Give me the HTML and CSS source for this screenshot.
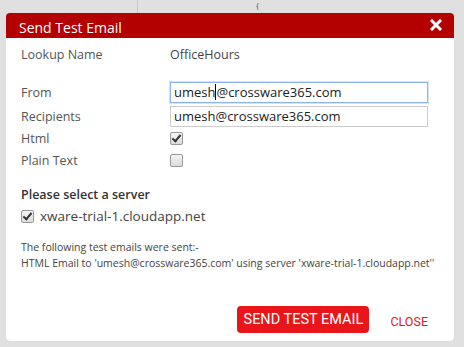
FILE: index.html
```html
<!DOCTYPE html>
<html lang="en">
<head>
    <meta charset="UTF-8">
    <title>Send Test Email</title>
    <link rel="stylesheet" href="styles.css">
</head>
<body>
    <div class="backdrop">
        <div class="bg-line"></div>
        <span class="bg-brace">{</span>
    </div>

    <div class="dialog">
        <div class="dialog-header">
            <span class="dialog-title">Send Test Email</span>
            <svg class="close-x" width="12" height="12" viewBox="0 0 12 12">
                <path d="M2 2 L10 10 M10 2 L2 10" stroke="#fff" stroke-width="3" stroke-linecap="square"/>
            </svg>
        </div>

        <div class="dialog-body">
            <div class="row lookup">
                <span class="label">Lookup Name</span>
                <span class="value">OfficeHours</span>
            </div>

            <div class="row field">
                <span class="label">From</span>
                <div class="input focused">umesh<span class="caret"></span>@crossware365.com</div>
            </div>
            <div class="row field">
                <span class="label">Recipients</span>
                <div class="input">umesh@crossware365.com</div>
            </div>
            <div class="row check">
                <span class="label">Html</span>
                <span class="box checked"></span>
            </div>
            <div class="row check">
                <span class="label">Plain Text</span>
                <span class="box"></span>
            </div>

            <h4 class="section">Please select a server</h4>
            <div class="server">
                <span class="box checked"></span>
                <span>xware-trial-1.cloudapp.net</span>
            </div>

            <div class="result">
                <p>The following test emails were sent:-</p>
                <p>HTML Email to 'umesh@crossware365.com' using server 'xware-trial-1.cloudapp.net''</p>
            </div>
        </div>

        <div class="dialog-footer">
            <button class="send-button">SEND TEST EMAIL</button>
            <button class="close-button">CLOSE</button>
        </div>
    </div>
</body>
</html>
```

FILE: styles.css
```css
body {
    margin: 0;
    width: 464px;
    height: 347px;
    background: #e0e0e0;
    font-family: 'Open Sans', 'Noto Sans', sans-serif;
    color: #333;
    overflow: hidden;
    position: relative;
}

.backdrop {
    position: absolute;
    inset: 0;
}

.bg-line {
    position: absolute;
    left: 137px;
    top: 0;
    width: 1px;
    height: 13px;
    background: #c8c8c8;
}

.bg-brace {
    position: absolute;
    left: 256px;
    top: 1px;
    font-size: 8px;
    line-height: 8px;
    color: #4a3b8c;
}

.dialog {
    position: absolute;
    left: 6px;
    top: 13px;
    width: 448px;
    height: 328px;
    background: #fff;
    border-radius: 4px;
    display: flex;
    flex-direction: column;
    box-shadow: 0 0 1px rgba(0, 0, 0, 0.15);
}

.dialog-header {
    background: #b30000;
    height: 25px;
    border-radius: 4px 4px 0 0;
    display: flex;
    align-items: center;
    justify-content: space-between;
    padding: 0 12px 0 13px;
}

.dialog-title {
    color: #fff;
    font-size: 14px;
    padding-top: 3px;
}

.close-x {
    margin-top: -2px;
}

.dialog-body {
    padding: 7px 0 0 15px;
    font-size: 12.5px;
    color: #555;
    flex: 1;
}

.row {
    display: flex;
    align-items: center;
}

.label {
    width: 149px;
}

.lookup {
    height: 19px;
    margin-bottom: 18px;
}

.value {
    color: #444;
}

.field {
    height: 21px;
}

.field + .field {
    margin-top: 3px;
}

.input {
    width: 253px;
    height: 19px;
    border: 1px solid #ccc;
    font-size: 13px;
    color: #222;
    line-height: 19px;
    padding-left: 3px;
    box-sizing: content-box;
}

.input.focused {
    border-color: #8cb4ea;
    box-shadow: 0 0 0 1px #d6e4f8;
}

.caret {
    display: inline-block;
    width: 1px;
    height: 16px;
    background: #000;
    vertical-align: -3px;
}

.check {
    height: 22px;
}

.box {
    width: 11px;
    height: 11px;
    border: 1px solid #999;
    border-radius: 2px;
    background: linear-gradient(#f4f4f4, #dcdcdc);
    position: relative;
    flex-shrink: 0;
}

.box.checked::after {
    content: "";
    position: absolute;
    left: 3px;
    top: 0;
    width: 3px;
    height: 7px;
    border: solid #333;
    border-width: 0 2px 2px 0;
    transform: rotate(40deg);
}

.section {
    margin: 15px 0 4px;
    font-size: 12.5px;
    line-height: 18px;
    font-weight: 600;
    color: #333;
}

.server {
    display: flex;
    align-items: center;
    gap: 6px;
    height: 16px;
    font-size: 13.5px;
    color: #444;
}

.result {
    margin-top: 15px;
    font-size: 10.5px;
    color: #444;
}

.result p {
    margin: 0;
    line-height: 16px;
}

.dialog-footer {
    display: flex;
    justify-content: flex-end;
    align-items: center;
    gap: 21px;
    padding: 0 26px 8px 0;
}

.send-button {
    background: #e8161a;
    color: #fff;
    border: none;
    border-radius: 4px;
    height: 27px;
    width: 132px;
    padding: 0;
    font-family: Roboto, sans-serif;
    font-size: 14.5px;
}

.close-button {
    background: none;
    border: none;
    color: #e8161a;
    font-family: Roboto, sans-serif;
    font-size: 12.5px;
    padding: 4px 0 0;
}
```
